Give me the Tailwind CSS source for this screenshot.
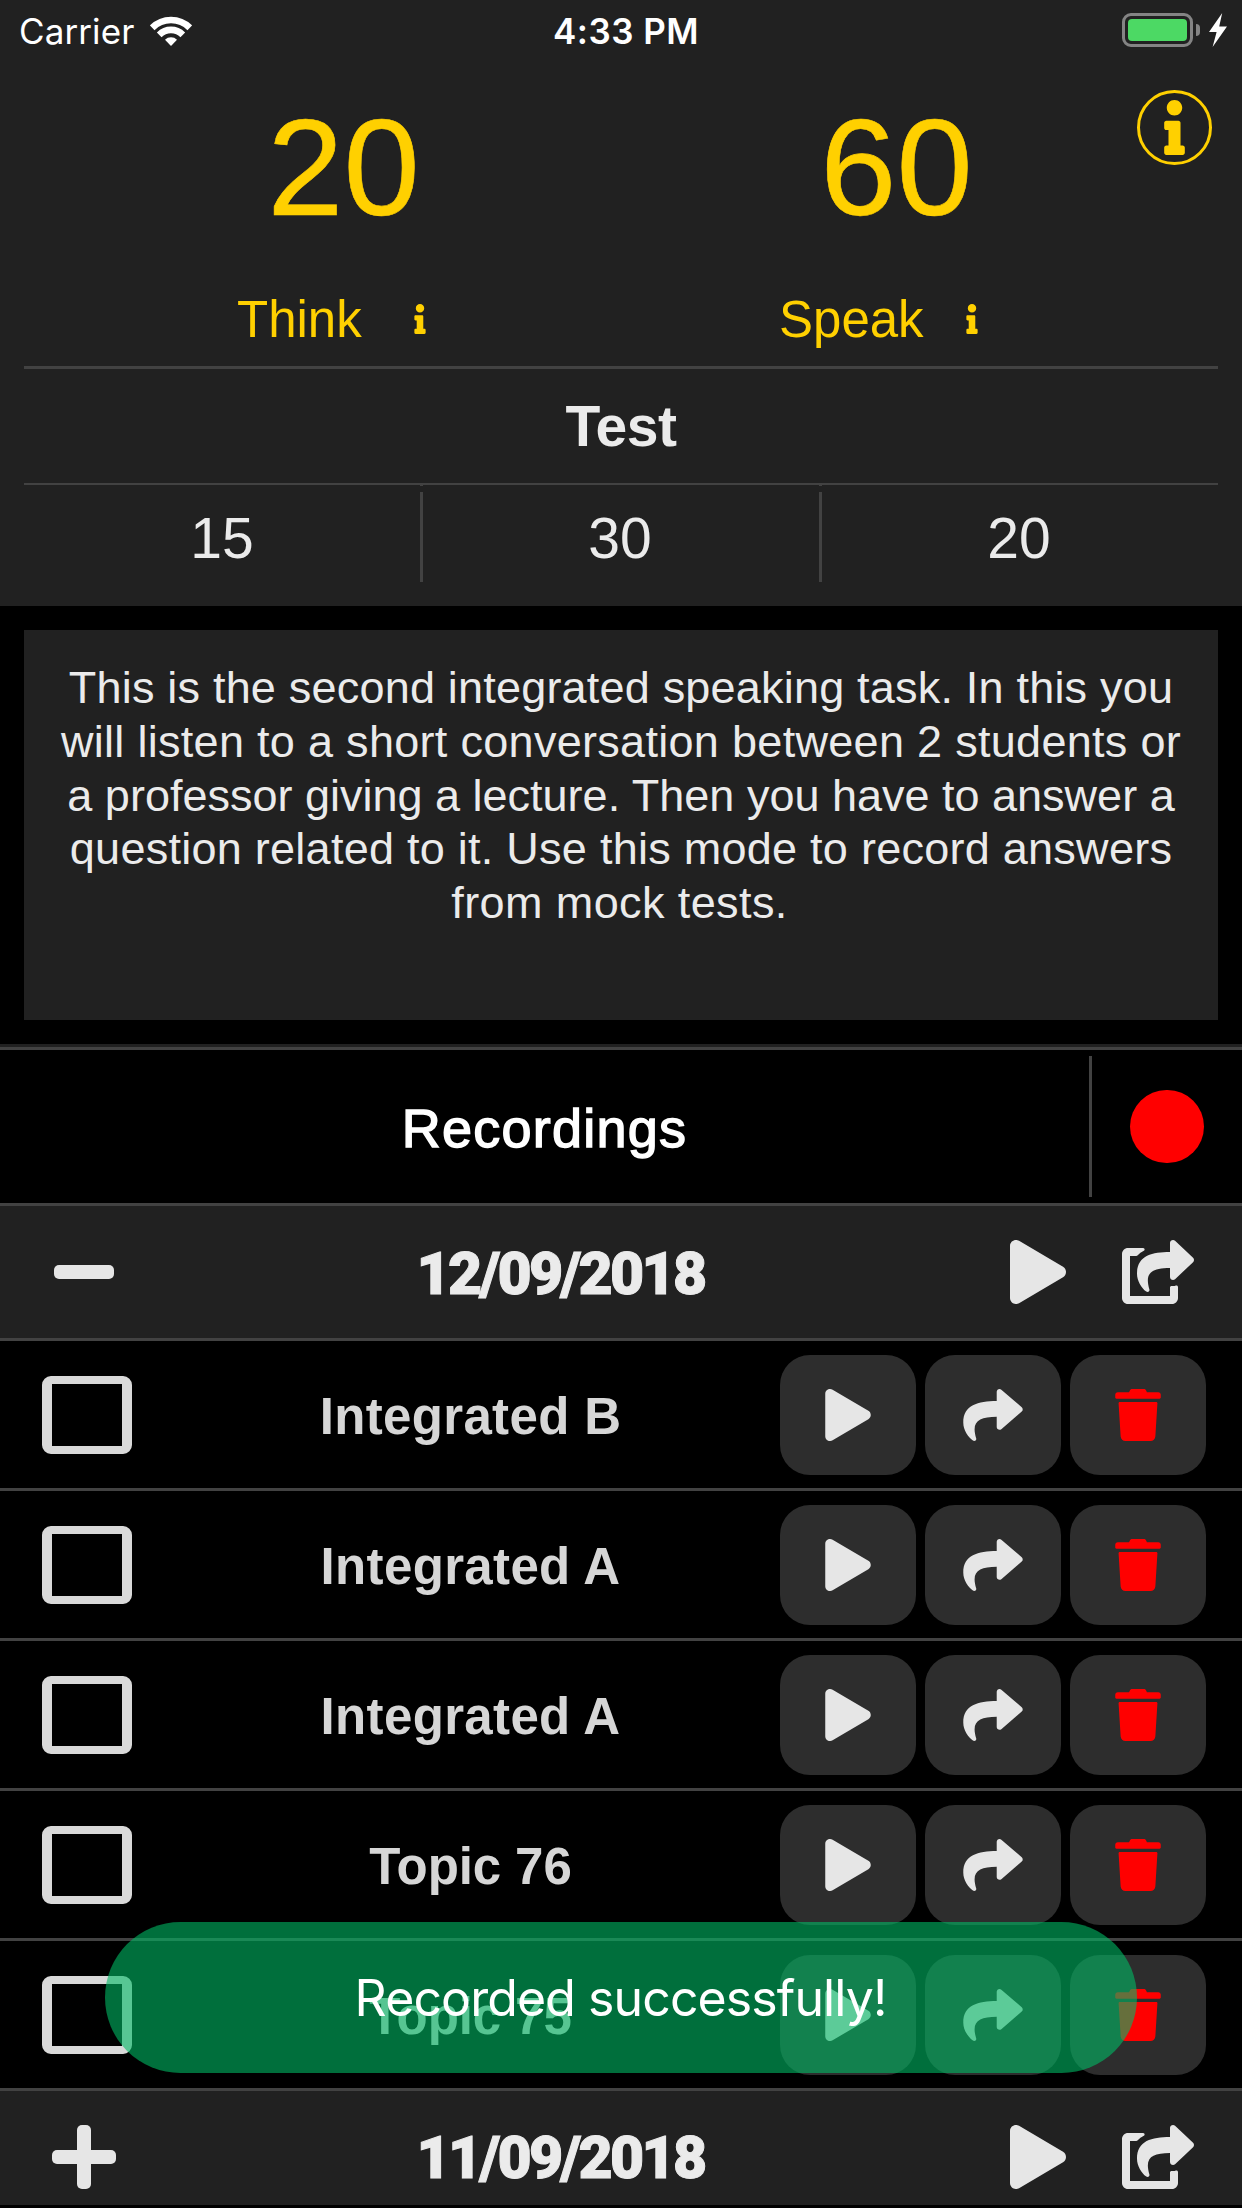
<!DOCTYPE html>
<html lang="en">
<head>
<meta charset="utf-8">
<title>Speaking Timer</title>
<script src="https://cdn.jsdelivr.net/npm/@tailwindcss/browser@4"></script>
</head>
<body class="bg-black">
<svg class="hidden">
  <symbol id="info" viewBox="0 0 192 512"><path d="M20 424.229h20V279.771H20c-11.046 0-20-8.954-20-20V212c0-11.046 8.954-20 20-20h112c11.046 0 20 8.954 20 20v212.229h20c11.046 0 20 8.954 20 20V492c0 11.046-8.954 20-20 20H20c-11.046 0-20-8.954-20-20v-47.771c0-11.046 8.954-20 20-20zM96 0C56.235 0 24 32.235 24 72s32.235 72 72 72 72-32.235 72-72S135.764 0 96 0z"/></symbol>
  <symbol id="play" viewBox="0 0 448 512"><path d="M424.4 214.7L72.4 6.6C43.8-10.3 0 6.1 0 47.9V464c0 37.5 40.7 60.1 72.4 41.3l352-208c31.4-18.5 31.5-64.1 0-82.6z"/></symbol>
  <symbol id="share" viewBox="0 32 512 448"><path d="M503.691 189.836L327.687 37.851C312.281 24.546 288 35.347 288 56.015v80.053C127.371 137.907 0 170.1 0 322.326c0 61.441 39.581 122.309 83.333 154.132 13.653 9.931 33.111-2.533 28.077-18.631C66.066 312.814 132.917 274.316 288 272.085V360c0 20.7 24.3 31.453 39.687 18.164l176.004-152c11.071-9.562 11.086-26.753 0-36.328z"/></symbol>
  <symbol id="trash" viewBox="0 0 448 512"><path d="M0 84V56c0-13.3 10.7-24 24-24h112l9.4-18.7c4-8.2 12.3-13.3 21.4-13.3h114.3c9.1 0 17.4 5.1 21.5 13.3L312 32h112c13.3 0 24 10.7 24 24v28c0 6.6-5.4 12-12 12H12C5.4 96 0 90.6 0 84zm415.2 56.7L394.8 467c-1.6 25.3-22.6 45-47.9 45H101.1c-25.3 0-46.3-19.7-47.9-45L32.8 140.7c-.4-6.9 5.1-12.7 12-12.7h358.5c6.8 0 12.3 5.8 11.9 12.7z"/></symbol>
  <symbol id="share-square" viewBox="0 0 576 512"><path d="M568.482 177.448L424.479 313.433C409.3 327.768 384 317.14 384 295.985v-71.963c-144.575.97-205.566 35.113-164.775 171.353 4.483 14.973-12.846 26.567-25.006 17.33C155.252 383.105 120 326.488 120 269.339c0-143.937 117.599-172.5 264-173.312V24.012c0-21.174 25.317-31.768 40.479-17.448l144.003 135.988c10.02 9.463 10.028 25.425 0 34.896zM384 379.128V448H64V128h50.916a11.99 11.99 0 0 0 8.648-3.693c14.953-15.568 32.237-27.89 51.014-37.676C185.708 80.83 181.584 64 169.033 64H48C21.49 64 0 85.49 0 112v352c0 26.51 21.49 48 48 48h352c26.51 0 48-21.49 48-48v-88.806c0-8.288-8.197-14.066-16.011-11.302a71.83 71.83 0 0 1-34.189 3.377c-7.27-1.046-13.8 4.514-13.8 11.859z"/></symbol>
</svg>

<main class="relative flex h-[2208px] w-[1242px] flex-col overflow-hidden bg-black font-['Liberation_Sans',Arial,sans-serif] text-[#ebebeb]">

  <section class="relative flex h-[606px] flex-col bg-[#212121]">
    <header class="grid h-[60px] grid-cols-3 items-center pt-[3px] font-['Inter',sans-serif] text-[35px] leading-none text-white">
      <div class="flex items-center gap-[16px] pl-[19px]">
        <span class="tracking-[0.1px]">Carrier</span>
        <svg class="h-[30px] w-[42px] -translate-y-[1px]" viewBox="0 0 42 30" fill="none" stroke="#fff" stroke-width="6.6">
          <path d="M2.2 11.8a26.6 26.6 0 0 1 37.6 0"/>
          <path d="M9.2 18.8a16.7 16.7 0 0 1 23.6 0"/>
          <path d="M21 30l-6-6.2a8.6 8.6 0 0 1 12 0z" fill="#fff" stroke="none"/>
        </svg>
      </div>
      <span class="pl-[10px] text-center font-semibold tracking-[0.5px]">4:33 PM</span>
      <div class="flex items-center justify-end pr-[15px] pb-[3px]">
        <div class="h-[34px] w-[71px] rounded-[9px] border-3 border-[#848484] p-[3px]"><div class="h-full w-full rounded-[4px] bg-[#4cd964]"></div></div>
        <div class="ml-[3px] h-[12px] w-[4px] rounded-r-full bg-[#848484]"></div>
        <svg class="ml-[9px] h-[34px] w-[18px]" viewBox="0 0 18 34" fill="#fff"><path d="M13.2 0L0 19h7.6L3.6 34 18 13.4h-7.8z"/></svg>
      </div>
    </header>

    <button class="absolute top-[90px] left-[1137px] flex h-[75px] w-[75px] items-center justify-center rounded-full border-3 border-[#ffd000]" aria-label="Help">
      <svg class="h-[55px] w-[21px] fill-[#ffd000]"><use href="#info"/></svg>
    </button>

    <div class="flex h-[214px] items-center text-[137px] leading-none text-[#ffd000] [-webkit-text-stroke:0.6px_#ffd000]">
      <span class="w-[687px] text-center">20</span>
      <span class="w-[419px] text-center">60</span>
    </div>
    <div class="flex h-[90px] items-center text-[51px] leading-none text-[#ffd000]">
      <div class="flex w-[541px] items-center pl-[237px]"><span class="w-[177px]">Think</span><svg class="h-[30px] w-[12px] fill-[#ffd000]"><use href="#info"/></svg></div>
      <div class="flex items-center pl-[238px]"><span class="w-[187px]">Speak</span><svg class="h-[30px] w-[12px] fill-[#ffd000]"><use href="#info"/></svg></div>
    </div>
    <div class="mx-6 mt-[2px] flex h-[119px] items-center justify-center border-t-3 border-b-2 border-[#424242] text-[57px] leading-none font-bold tracking-[-0.5px]">Test</div>
    <div class="mx-6 grid h-[106px] grid-cols-[396px_399px_1fr] text-[57px] leading-none">
      <span class="flex items-center justify-center">15</span>
      <span class="relative flex items-center justify-center pl-px before:absolute before:top-[7px] before:left-0 before:h-[90px] before:w-[3px] before:bg-[#424242] after:absolute after:top-0 after:left-0 after:h-px after:w-[3px] after:bg-[#424242]">30</span>
      <span class="relative flex items-center justify-center pl-px before:absolute before:top-[7px] before:left-0 before:h-[90px] before:w-[3px] before:bg-[#424242] after:absolute after:top-0 after:left-0 after:h-px after:w-[3px] after:bg-[#424242]">20</span>
    </div>
  </section>

  <p class="mx-6 mt-6 h-[390px] shrink-0 bg-[#212121] pt-[31px] text-center text-[45px] leading-[53.75px]"><span class="tracking-[0.2px]">This is the second integrated speaking task. In this you</span><br><span class="tracking-[0.3px]">will listen to a short conversation between 2 students or</span><br>a professor giving a lecture. Then you have to answer a<br><span class="tracking-[0.26px]">question related to it. Use this mode to record answers</span><br><span class="mr-[3px] tracking-[0.4px]">from mock tests.</span></p>

  <div class="mt-6 h-[3px] shrink-0 bg-[#212121]"></div>
  <div class="flex h-[159px] shrink-0 items-center border-y-3 border-[#424242] text-white">
    <h2 class="w-[1089px] pt-[3px] text-center text-[54px] leading-none tracking-[1.25px] [-webkit-text-stroke:1.4px_#fff]">Recordings</h2>
    <div class="h-[141px] w-[3px] bg-[#424242]"></div>
    <button class="ml-[38px] h-[73px] w-[74px] rounded-full bg-[#ff0000]" aria-label="Record"></button>
  </div>

  <div class="flex h-[135px] shrink-0 items-center border-b-3 border-[#424242] bg-[#212121]">
    <div class="flex w-[168px] justify-center"><div class="h-[14px] w-[60px] rounded-[5px] bg-[#e6e6e6]"></div></div>
    <h3 class="w-[785px] pt-[2px] text-center font-['Roboto',sans-serif] text-[59px] leading-none font-black tracking-[-2.7px] [-webkit-text-stroke:1px_#ebebeb]">12/09/2018</h3>
    <svg class="ml-[57px] h-[64px] w-[56px] fill-[#e6e6e6]"><use href="#play"/></svg>
    <svg class="ml-[56px] h-[64px] w-[72px] fill-[#e6e6e6]"><use href="#share-square"/></svg>
  </div>

  <div id="rows" class="flex shrink-0 flex-col"></div>

  <div class="flex h-[114px] shrink-0 items-start bg-[#212121] pt-[34px]">
    <div class="flex h-[64px] w-[168px] items-center justify-center">
      <svg class="h-[64px] w-[64px] fill-[#e6e6e6]" viewBox="0 0 64 64"><rect y="25" width="64" height="14" rx="5"/><rect x="25" width="14" height="64" rx="5"/></svg>
    </div>
    <h3 class="w-[785px] pt-[3px] text-center font-['Roboto',sans-serif] text-[59px] leading-none font-black tracking-[-2.7px] [-webkit-text-stroke:1px_#ebebeb]">11/09/2018</h3>
    <svg class="ml-[57px] h-[64px] w-[56px] fill-[#e6e6e6]"><use href="#play"/></svg>
    <svg class="ml-[56px] h-[64px] w-[72px] fill-[#e6e6e6]"><use href="#share-square"/></svg>
  </div>

  <div class="absolute top-[1922px] left-[105px] flex h-[151px] w-[1032px] items-center justify-center rounded-full bg-[#00b964]/60 pr-px font-['Inter',sans-serif] text-[50px] leading-none tracking-[-0.9px] text-white">Recorded successfully!</div>
  <div class="absolute top-[2205px] left-0 h-[3px] w-full bg-black"></div>
</main>

<script>
  const names = ['Integrated B', 'Integrated A', 'Integrated A', 'Topic 76', 'Topic 75'];
  document.getElementById('rows').innerHTML = names.map(name => `
    <div class="flex h-[150px] items-center border-b-3 border-[#424242]">
      <div class="ml-[42px] h-[78px] w-[90px] rounded-[9px] border-x-10 border-y-8 border-[#d9d9d9]"></div>
      <span class="ml-[28px] w-[621px] pt-[4px] text-center text-[51px] leading-none font-bold text-[#d6d6d6] ${name.startsWith('Topic') ? 'tracking-[-0.1px]' : 'tracking-[0.35px]'}">${name}</span>
      <div class="-ml-px flex gap-[9px] pt-[1px]">
        <button class="flex h-[120px] w-[136px] items-center justify-center rounded-[30px] bg-[#2d2d2d]"><svg class="h-[52px] w-[46px] fill-[#e6e6e6]"><use href="#play"/></svg></button>
        <button class="flex h-[120px] w-[136px] items-center justify-center rounded-[30px] bg-[#2d2d2d]"><svg class="h-[52px] w-[60px] fill-[#e6e6e6]"><use href="#share"/></svg></button>
        <button class="flex h-[120px] w-[136px] items-center justify-center rounded-[30px] bg-[#2d2d2d]"><svg class="h-[52px] w-[46px] fill-[#ff0000]"><use href="#trash"/></svg></button>
      </div>
    </div>`).join('');
</script>
</body>
</html>
